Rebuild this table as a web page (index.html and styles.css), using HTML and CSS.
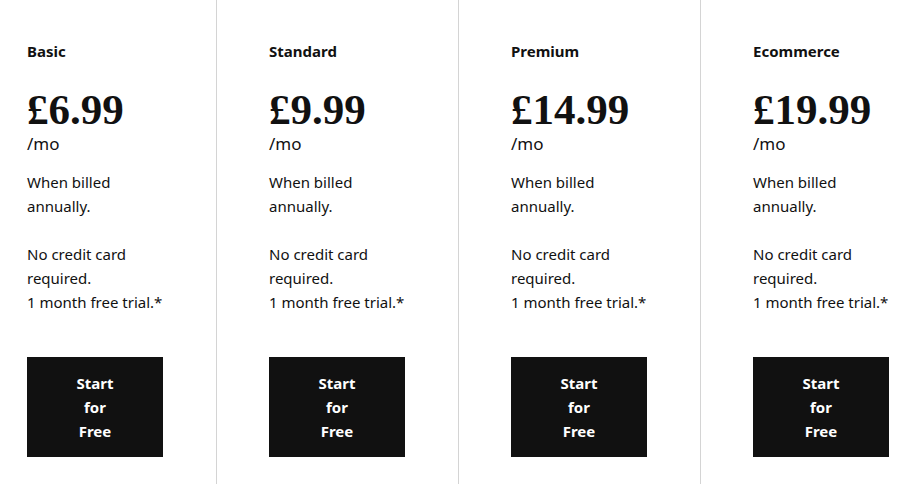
FILE: index.html
```html
<!DOCTYPE html>
<html lang="en">
<head>
<meta charset="utf-8">
<title>Plans</title>
<link rel="stylesheet" href="styles.css">
</head>
<body>
<div class="plans">
  <div class="plan">
    <h3 class="plan-name">Basic</h3>
    <div class="price">£6.99</div>
    <div class="term">/mo</div>
    <p class="note">When billed annually.</p>
    <p class="note gap">No credit card required.<br>1 month free trial.*</p>
    <a class="cta" href="#"><span class="cta-label">Start for Free</span></a>
  </div>
  <div class="plan">
    <h3 class="plan-name">Standard</h3>
    <div class="price">£9.99</div>
    <div class="term">/mo</div>
    <p class="note">When billed annually.</p>
    <p class="note gap">No credit card required.<br>1 month free trial.*</p>
    <a class="cta" href="#"><span class="cta-label">Start for Free</span></a>
  </div>
  <div class="plan">
    <h3 class="plan-name">Premium</h3>
    <div class="price">£14.99</div>
    <div class="term">/mo</div>
    <p class="note">When billed annually.</p>
    <p class="note gap">No credit card required.<br>1 month free trial.*</p>
    <a class="cta" href="#"><span class="cta-label">Start for Free</span></a>
  </div>
  <div class="plan">
    <h3 class="plan-name">Ecommerce</h3>
    <div class="price">£19.99</div>
    <div class="term">/mo</div>
    <p class="note">When billed annually.</p>
    <p class="note gap">No credit card required.<br>1 month free trial.*</p>
    <a class="cta" href="#"><span class="cta-label">Start for Free</span></a>
  </div>
</div>
</body>
</html>
```
FILE: styles.css
```css
html, body {
  margin: 0;
  padding: 0;
  background: #fff;
}
body {
  font-family: "Noto Sans", "Liberation Sans", sans-serif;
  color: #111;
  overflow: hidden;
}
.plans {
  display: flex;
  gap: 25px;
  height: 484px;
}
.plan {
  flex: 0 0 auto;
  width: 189px;
  padding: 39px 0 0 27px;
  border-right: 1px solid #d4d4d4;
  box-sizing: content-box;
}
.plan-name {
  margin: 0;
  font-size: 15px;
  line-height: 24px;
  font-weight: 700;
}
.price {
  margin-top: 25px;
  font-family: "Liberation Serif", serif;
  font-weight: 700;
  font-size: 43px;
  line-height: 44px;
}
.term {
  margin-top: 1px;
  font-size: 17px;
  line-height: 22px;
}
.note {
  margin: 15px 0 0;
  width: 120px;
  font-size: 15px;
  line-height: 24px;
}
.note.gap {
  margin-top: 24px;
  width: 150px;
}
.cta {
  display: flex;
  justify-content: center;
  margin-top: 43px;
  width: 136px;
  padding: 14px 0;
  background: #111;
  color: #fff;
  text-decoration: none;
  font-size: 15px;
  line-height: 24px;
  font-weight: 700;
  text-align: center;
}
.cta-label {
  width: min-content;
}
```
